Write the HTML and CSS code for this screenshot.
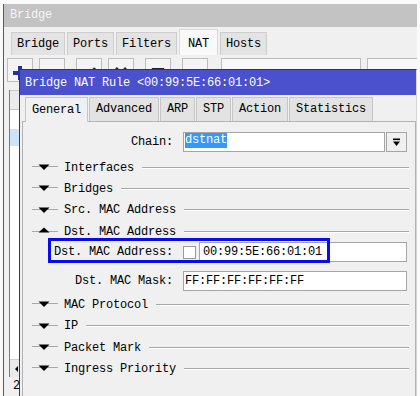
FILE: index.html
```html
<!DOCTYPE html>
<html>
<head>
<meta charset="utf-8">
<link rel="stylesheet" href="styles.css">
</head>
<body>
<div class="screen">
  <div class="win">
    <div class="win-title">Bridge</div>
    <div class="win-tabs">
      <div class="wtab">Bridge</div>
      <div class="wtab">Ports</div>
      <div class="wtab">Filters</div>
      <div class="wtab active">NAT</div>
      <div class="wtab">Hosts</div>
    </div>
    <div class="toolbar">
      <div class="tb"><svg width="14" height="14" viewBox="0 0 14 14"><path d="M5 0h4v5h5v4H9v5H5V9H0V5h5z" fill="#26349e"/></svg></div>
      <div class="tb"><svg width="14" height="14" viewBox="0 0 14 14"><rect x="0" y="5" width="14" height="4" fill="#c0262a"/></svg></div>
      <div class="tb sp"><svg width="14" height="14" viewBox="0 0 14 14"><path d="M1 7l4 4 8-9" fill="none" stroke="#222" stroke-width="2.5"/></svg></div>
      <div class="tb"><svg width="14" height="14" viewBox="0 0 14 14"><path d="M2 2l10 10M12 2L2 12" fill="none" stroke="#222" stroke-width="2.5"/></svg></div>
      <div class="tb sp"><svg width="14" height="14" viewBox="0 0 14 14"><rect x="1" y="3" width="12" height="10" fill="#fff3a0" stroke="#555"/><rect x="1" y="2" width="12" height="2" fill="#222"/></svg></div>
      <div class="tb sp"><svg width="14" height="14" viewBox="0 0 14 14"><path d="M1.5 3.5h11l-4 5v4h-3v-4z" fill="#e6e6e6" stroke="#6a6a6a"/></svg></div>
      <div class="tb find"></div>
      <div class="tb find2"></div>
    </div>
    <div class="list">
      <div class="list-head"></div>
      <div class="list-row"></div>
      <div class="list-row sel"></div>
      <div class="list-fill"></div>
      <div class="hscroll"><span class="arrow-l"></span></div>
    </div>
    <div class="status">2 items</div>
  </div>

  <div class="dialog">
    <div class="dlg-title">Bridge NAT Rule &lt;00:99:5E:66:01:01&gt;</div>
    <div class="dlg-tabs">
      <div class="dtab active">General</div>
      <div class="dtab">Advanced</div>
      <div class="dtab">ARP</div>
      <div class="dtab">STP</div>
      <div class="dtab">Action</div>
      <div class="dtab">Statistics</div>
    </div>
    <div class="panel">
      <div class="field chain">
        <span class="flabel">Chain:</span>
        <div class="input"><span class="selected">dstnat</span></div>
        <div class="dd-btn"><svg width="9" height="9" viewBox="0 0 9 9"><rect x="1" y="0.5" width="7" height="1.6" fill="#000"/><path d="M1 3.5h7L4.5 8z" fill="#000"/></svg></div>
      </div>

      <div class="sec"><svg class="tri" viewBox="0 0 26 9"><path d="M0 3.5h26" stroke="#a8a8a8"/><path d="M6.5 1.5h11L12 7z" fill="#000"/></svg><span>Interfaces</span><div class="rule"></div></div>
      <div class="sec"><svg class="tri" viewBox="0 0 26 9"><path d="M0 3.5h26" stroke="#a8a8a8"/><path d="M6.5 1.5h11L12 7z" fill="#000"/></svg><span>Bridges</span><div class="rule"></div></div>
      <div class="sec"><svg class="tri" viewBox="0 0 26 9"><path d="M0 3.5h26" stroke="#a8a8a8"/><path d="M6.5 1.5h11L12 7z" fill="#000"/></svg><span>Src. MAC Address</span><div class="rule"></div></div>
      <div class="sec"><svg class="tri" viewBox="0 0 26 9"><path d="M0 4.5h26" stroke="#a8a8a8"/><path d="M12 0.5L17.5 5.5h-11z" fill="#000"/></svg><span>Dst. MAC Address</span><div class="rule"></div></div>

      <div class="field dstmac">
        <span class="flabel">Dst. MAC Address:</span>
        <span class="check"></span>
        <div class="input wide-pad">00:99:5E:66:01:01</div>
        <div class="annot"></div>
      </div>

      <div class="field mask">
        <span class="flabel">Dst. MAC Mask:</span>
        <div class="input">FF:FF:FF:FF:FF:FF</div>
      </div>

      <div class="sec after-mask"><svg class="tri" viewBox="0 0 26 9"><path d="M0 3.5h26" stroke="#a8a8a8"/><path d="M6.5 1.5h11L12 7z" fill="#000"/></svg><span>MAC Protocol</span><div class="rule"></div></div>
      <div class="sec"><svg class="tri" viewBox="0 0 26 9"><path d="M0 3.5h26" stroke="#a8a8a8"/><path d="M6.5 1.5h11L12 7z" fill="#000"/></svg><span>IP</span><div class="rule"></div></div>
      <div class="sec"><svg class="tri" viewBox="0 0 26 9"><path d="M0 3.5h26" stroke="#a8a8a8"/><path d="M6.5 1.5h11L12 7z" fill="#000"/></svg><span>Packet Mark</span><div class="rule"></div></div>
      <div class="sec"><svg class="tri" viewBox="0 0 26 9"><path d="M0 3.5h26" stroke="#a8a8a8"/><path d="M6.5 1.5h11L12 7z" fill="#000"/></svg><span>Ingress Priority</span><div class="rule"></div></div>
    </div>
  </div>
</div>
</body>
</html>
```

FILE: styles.css
```css
body {
  margin: 0;
  background: #fafafa;
  font-family: "Liberation Mono", "DejaVu Sans Mono", monospace;
  font-size: 12px;
  letter-spacing: -0.2px;
  color: #000;
}

.screen {
  position: relative;
  width: 420px;
  height: 396px;
  overflow: hidden;
}

/* background window */
.win {
  margin: 4px 3px 0 3px;
  height: 392px;
  background: #f0f0f0;
  border-left: 1px solid #5a5a5a;
  display: flex;
  flex-direction: column;
  overflow: hidden;
}

.win-title {
  height: 23px;
  line-height: 23px;
  background: #c3c3c3;
  color: #f6f6f6;
  padding-left: 6px;
  flex: none;
}

.win-tabs {
  display: flex;
  align-items: flex-end;
  gap: 2px;
  padding-left: 7px;
  height: 28px;
  flex: none;
}

.wtab {
  height: 23px;
  line-height: 22px;
  padding: 0 5px;
  background: #e3e3e3;
  border: 1px solid #cdcdcd;
  border-bottom: none;
  box-sizing: border-box;
}

.wtab.active {
  height: 26px;
  padding: 3px 8px 0;
  background: #f9f9f9;
  border-color: #dadada;
}

.toolbar {
  display: flex;
  gap: 6px;
  padding-left: 3px;
  margin-top: 3px;
  height: 24px;
  flex: none;
}

.tb {
  width: 26px;
  height: 24px;
  box-sizing: border-box;
  border: 1px solid #bdbdbd;
  background: #f4f4f4;
  display: flex;
  align-items: flex-start;
  justify-content: center;
  padding-top: 7px;
  flex: none;
}

.tb.sp { margin-left: 5px; }
.tb.find { width: 140px; margin-left: 7px; background: #f7f7f7; }
.tb.find2 { width: 60px; background: #f7f7f7; }

.list {
  flex: 1;
  margin: 8px 0 0 5px;
  border-left: 1px solid #7c7c7c;
  background: #fff;
  display: flex;
  flex-direction: column;
}

.list-head {
  height: 18px;
  background: #ebebeb;
  border-top: 1px solid #c8c8c8;
  border-bottom: 1px solid #c8c8c8;
  flex: none;
}

.list-row { height: 19px; flex: none; }
.list-row.sel { height: 17px; background: #cce4f7; }
.list-fill { flex: 1; }

.hscroll {
  height: 17px;
  background: #e9e9e9;
  border-top: 1px solid #cfcfcf;
  flex: none;
  display: flex;
  align-items: center;
  padding-left: 5px;
}

.arrow-l {
  width: 0;
  height: 0;
  border-top: 3px solid transparent;
  border-bottom: 3px solid transparent;
  border-right: 3px solid #000;
}

.status {
  height: 19px;
  line-height: 19px;
  padding-left: 9px;
  flex: none;
}

/* dialog window */
.dialog {
  position: absolute;
  left: 19px;
  top: 69px;
  width: 398px;
  height: 340px;
  box-sizing: border-box;
  border: 1px solid #3a3a3a;
  border-right-color: #d6d6d6;
  background: #f0f0f0;
}

.dlg-title {
  height: 25px;
  line-height: 26px;
  background: #4b50cc;
  color: #fff;
  padding-left: 5px;
}

.dlg-tabs {
  display: flex;
  align-items: flex-end;
  gap: 1px;
  padding: 2px 0 0 5px;
  height: 26px;
  box-sizing: border-box;
  position: relative;
  z-index: 1;
}

.dtab {
  height: 24px;
  line-height: 23px;
  padding: 0 6px;
  background: #e3e3e3;
  border: 1px solid #c6c6c6;
  border-bottom: none;
  box-sizing: border-box;
}

.dtab.active {
  height: 25px;
  margin-bottom: -1px;
  background: #f0f0f0;
  line-height: 24px;
}

.panel {
  margin-left: 2px;
  width: 394px;
  height: 300px;
  box-sizing: border-box;
  border: 1px solid #b2b2b2;
  border-bottom: none;
  padding: 10px 8px 0 0;
}

.field {
  display: flex;
  align-items: center;
  height: 20px;
  position: relative;
}

.flabel {
  width: 150px;
  text-align: right;
  margin-right: 10px;
  flex: none;
  white-space: nowrap;
}

.input {
  flex: 1;
  height: 20px;
  box-sizing: border-box;
  border: 1px solid #a5a5a5;
  background: #fff;
  padding-left: 1px;
  line-height: 18px;
  white-space: nowrap;
  overflow: hidden;
}

.input.wide-pad { padding-left: 3px; }

.selected {
  display: inline-block;
  background: #3399ff;
  color: #fff;
  line-height: 15px;
  height: 15px;
  vertical-align: middle;
  margin-top: -2px;
}

.dd-btn {
  width: 21px;
  height: 20px;
  margin-left: 1px;
  box-sizing: border-box;
  border: 1px solid #a5a5a5;
  background: #f0f0f0;
  display: flex;
  align-items: center;
  justify-content: center;
  flex: none;
}

.check {
  width: 13px;
  height: 13px;
  box-sizing: border-box;
  border: 1px solid #9a9a9a;
  background: #fff;
  margin-right: 3px;
  flex: none;
}

.field.chain { margin-bottom: 5px; }
.field.mask { margin-top: 9px; }

.sec {
  height: 21.33px;
  display: flex;
  align-items: center;
  white-space: nowrap;
}

.sec.after-mask { margin-top: 3px; }

.tri {
  width: 26px;
  height: 9px;
  margin: 0 6px 0 9px;
  flex: none;
}

.rule {
  flex: 1;
  height: 0;
  margin: 0 -2px 0 8px;
  border-top: 1px solid #a8a8a8;
  border-bottom: 1px solid #fff;
}

.annot {
  position: absolute;
  left: 25px;
  top: -4px;
  width: 282px;
  height: 25px;
  box-sizing: border-box;
  border: 3px solid #0a0af0;
  pointer-events: none;
}
```
